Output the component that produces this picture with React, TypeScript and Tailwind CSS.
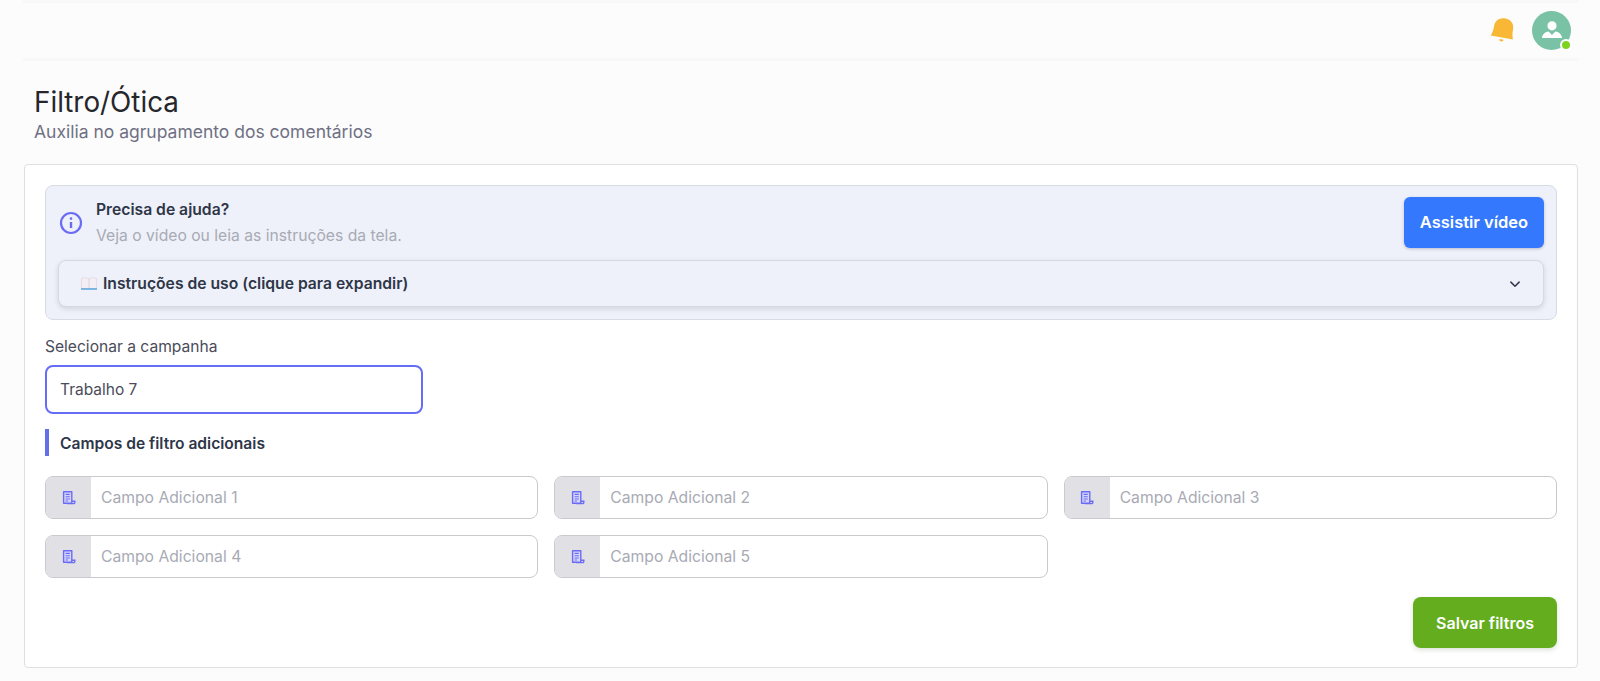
import React from "react";

function DocIcon() {
  return (
    <svg width="16" height="16" viewBox="0 0 16 16" fill="none" stroke="#6a6cf6" strokeWidth="1.4">
      <path d="M2.600 1.700h8.200v11.600H2.600z" fill="#d6d6f8" strokeLinejoin="round" />
      <path d="M4.600 4.400h4.200M4.600 6.700h4.200M4.600 9h4.200M4.600 11h2.400" strokeWidth="1.1" />
      <path d="M10.800 11.200h3v1.200a1.200 1.200 0 0 1-1.200 1.200H6" strokeWidth="1.4" />
    </svg>
  );
}

function FieldInput({ n }: { n: number }) {
  return (
    <div className="flex h-[43px] overflow-hidden rounded-[8px] border border-[#c9c9ce] bg-white">
      <div className="flex w-[45px] shrink-0 items-center justify-center bg-[#e0e0e5]">
        <DocIcon />
      </div>
      <div className="flex flex-1 items-center pl-[10px] pt-[1px] text-[15.7px] text-[#a8aab4]">Campo Adicional {n}</div>
    </div>
  );
}

export default function App() {
  return (
    <div className="h-[681px] w-[1600px] overflow-hidden bg-[#fcfcfd] px-[24px] font-['Inter',sans-serif]">
      <header className="flex h-[61px] w-[1556px] -ml-px items-center justify-end border-y-[3px] border-[#f8f8f9] pr-[8px]">
        <svg width="32" height="32" viewBox="0 0 30 30" className="mr-[13px] mt-[1px]">
          <g transform="rotate(10 15 15)">
            <path d="M15 3c5.600 0 9 3.600 9 8.600 0 3.600.3 6.600 1.600 9.600H4.400C5.700 18.200 6 15.200 6 11.600 6 6.600 9.400 3 15 3z" fill="#f8b735" />
            <path d="M13 23h4a2 2 0 0 1-4 0z" fill="#f8b735" />
          </g>
        </svg>
        <div className="relative flex h-[39px] w-[39px] items-center justify-center rounded-full bg-[#7ac2a6]">
          <svg width="24" height="24" viewBox="0 0 24 24" fill="white">
            <circle cx="12" cy="6.800" r="4.600" />
            <path d="M8.600 12.600 12 16l3.400-3.400c2.800.4 6.200 2.200 6.600 6.400H2c.4-4.200 3.800-6 6.600-6.400z" />
          </svg>
          <span className="absolute -bottom-[1px] -right-[1px] h-[12px] w-[12px] rounded-full border-2 border-white bg-[#7ed321]" />
        </div>
      </header>

      <div className="ml-[10px] mt-[25px]">
        <h1 className="text-[27.8px] leading-[32px] text-[#26272b]">Filtro/Ótica</h1>
        <p className="mt-[2px] text-[17.5px] leading-[24px] text-[#6f7083]">Auxilia no agrupamento dos comentários</p>
      </div>

      <main className="mt-[20px] h-[504px] w-[1554px] rounded-[4px] border border-[#dedfe3] bg-white px-[20px] pt-[20px]">
        <section className="h-[135px] rounded-[8px] border border-[#d9dbe3] bg-[#eef1f9] px-[12px] pt-[11px]">
          <div className="flex h-[51px] items-center justify-between">
            <div className="flex items-center">
              <svg width="24" height="24" viewBox="0 0 24 24" fill="none" stroke="#6a6cf6" strokeWidth="2.200" className="mr-[13px] ml-[1px]">
                <circle cx="12" cy="12" r="10" />
                <path d="M12 11v6" strokeWidth="2.400" />
                <circle cx="12" cy="7.600" r="1.300" fill="#6a6cf6" stroke="none" />
              </svg>
              <div>
                <div className="text-[15.7px] font-semibold leading-[24px] text-[#2e3648]">Precisa de ajuda?</div>
                <div className="mt-[1px] text-[15.7px] leading-[25px] text-[#a8aab4]">Veja o vídeo ou leia as instruções da tela.</div>
              </div>
            </div>
            <button className="flex h-[51px] w-[140px] items-center justify-center rounded-[6px] bg-[#3478fe] text-[16.5px] font-semibold text-white shadow-[0_1px_3px_rgba(60,70,120,0.3)]">
              Assistir vídeo
            </button>
          </div>
          <div className="mt-[12px] flex h-[47px] items-center justify-between rounded-[8px] border border-[#d6d8e2] bg-[#eef1f9] pl-[22px] pr-[22px] shadow-[0_2px_5px_rgba(60,60,90,0.16)]">
            <div className="flex items-center text-[15.7px] font-semibold text-[#2e3648]">
              <span className="mr-[6px] text-[#7aa9d8]">
                <svg width="16" height="14" viewBox="0 0 16 14">
                  <path d="M.5 2.500C3 1.500 6 1.500 8 2.800c2-1.300 5-1.300 7.500-.3v10H.5z" fill="#f3eef3" stroke="#d8cfdd" strokeWidth=".6" />
                  <path d="M8 2.800v9.600" stroke="#cfc6d6" strokeWidth=".7" />
                  <path d="M0 12.200h16v1.600H0z" fill="#63a8dc" />
                </svg>
              </span>
              Instruções de uso (clique para expandir)
            </div>
            <svg width="12" height="12" viewBox="0 0 16 16" fill="none" stroke="#33364a" strokeWidth="2" strokeLinecap="round" strokeLinejoin="round">
              <path d="M2.500 5.500 8 11l5.500-5.500" />
            </svg>
          </div>
        </section>

        <label className="mt-[16px] block text-[15.6px] leading-[22px] text-[#4a4c5a]">Selecionar a campanha</label>
        <div className="mt-[7px] flex h-[49px] w-[378px] items-center rounded-[8px] border-2 border-[#666cf5] bg-white pl-[13px] text-[15.5px] text-[#4a4c5a]">
          Trabalho 7
        </div>

        <div className="mt-[15px] flex h-[27px] items-center border-l-[4px] border-[#626fe8] pl-[11px] pt-[2px] text-[15.6px] font-semibold text-[#2e3648]">
          Campos de filtro adicionais
        </div>

        <div className="mt-[20px] grid grid-cols-3 gap-x-[16px] gap-y-[16px]">
          {[1, 2, 3, 4, 5].map((n) => (
            <FieldInput key={n} n={n} />
          ))}
        </div>

        <div className="mt-[19px] flex justify-end">
          <button className="flex h-[51px] w-[144px] items-center justify-center rounded-[8px] bg-[#63ad1e] text-[16px] font-semibold text-white shadow-[0_2px_5px_rgba(60,90,40,0.18)]">
            Salvar filtros
          </button>
        </div>
      </main>
    </div>
  );
}
